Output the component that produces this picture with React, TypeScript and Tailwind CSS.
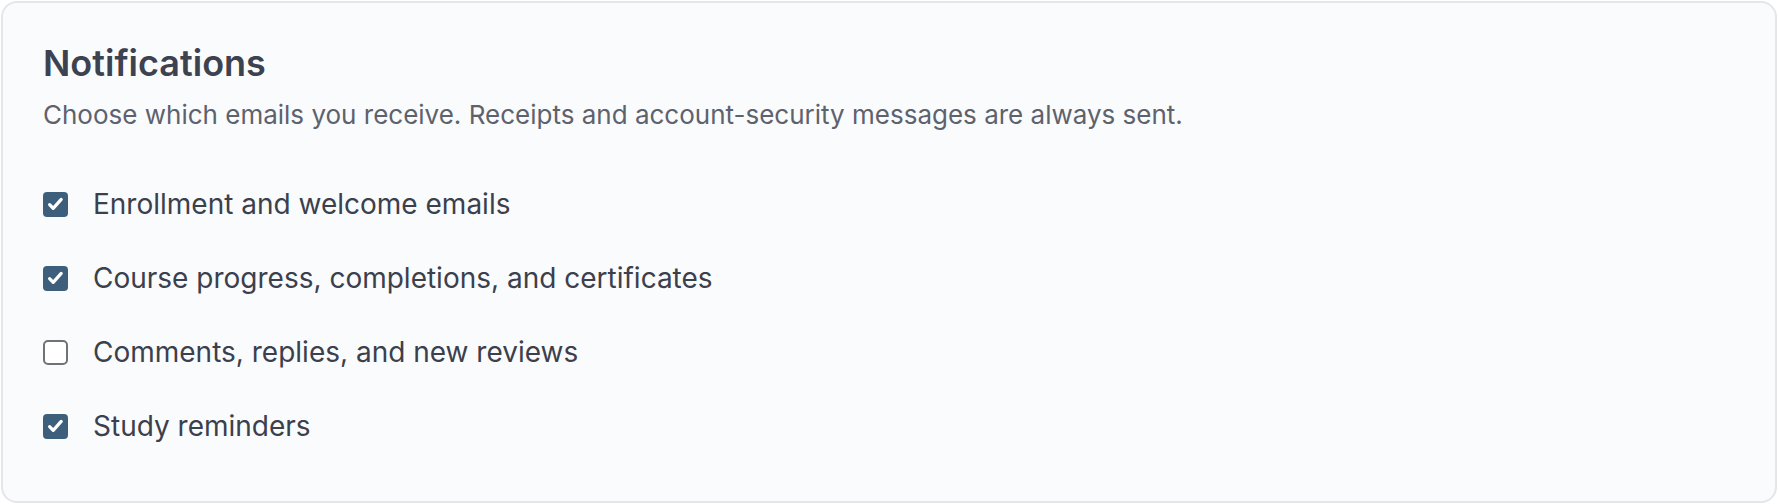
import React from "react";

const items = [
  { label: "Enrollment and welcome emails", checked: true },
  { label: "Course progress, completions, and certificates", checked: true },
  { label: "Comments, replies, and new reviews", checked: false },
  { label: "Study reminders", checked: true },
];

function Box({ checked }: { checked: boolean }) {
  if (checked) {
    return (
      <span className="flex h-[25px] w-[25px] shrink-0 items-center justify-center rounded-[4px] bg-[#3d5f7c]">
        <svg width="25" height="25" viewBox="0 0 25 25" fill="none">
          <path d="M6.6 12.6l3.6 3.8 8-9" stroke="#fff" strokeWidth="3.2" strokeLinecap="round" strokeLinejoin="round" />
        </svg>
      </span>
    );
  }
  return <span className="h-[25px] w-[25px] shrink-0 rounded-[5px] border-2 border-[#707277] bg-white" />;
}

export default function App() {
  return (
    <div className="bg-white p-px" style={{ fontFamily: "Inter, 'Noto Sans', sans-serif" }}>
      <div className="h-[502px] rounded-2xl border-2 border-[#e4e6e9] bg-[#fafbfd] px-[40px] pt-[40px]">
        <h2 className="text-[36px] font-semibold leading-[40px] text-[#3d4250]">Notifications</h2>
        <p className="mt-[12px] text-[26px] leading-[40px] text-[#5d626d]">
          Choose which emails you receive. Receipts and account-security messages are always sent.
        </p>
        <div className="mt-[45px] flex flex-col gap-[26px]">
          {items.map((it) => (
            <label key={it.label} className="flex h-[48px] items-center gap-[25px]">
              <Box checked={it.checked} />
              <span className="text-[28px] leading-[48px] text-[#3b404c]">{it.label}</span>
            </label>
          ))}
        </div>
      </div>
    </div>
  );
}
